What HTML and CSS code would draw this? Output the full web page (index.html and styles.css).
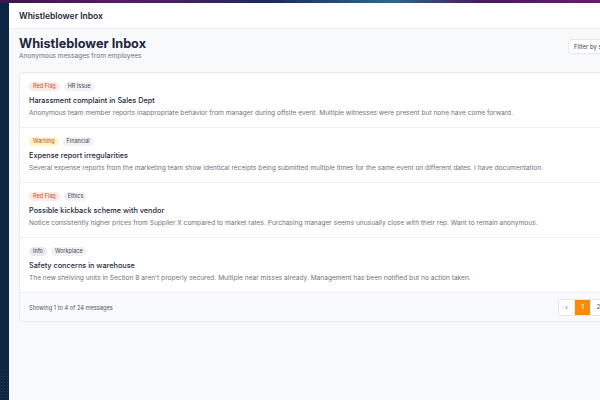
FILE: index.html
```html
<!DOCTYPE html>
<html lang="en">
<head>
    <meta charset="UTF-8">
    <meta name="viewport" content="width=device-width, initial-scale=1.0">
    <title>Whistleblower Inbox</title>
    <link rel="stylesheet" href="styles.css">
</head>
<body>
    <div class="topline"></div>
    <div class="layout">
        <aside class="sidebar"><div class="dots"></div></aside>
        <div class="app">
            <header class="appbar">Whistleblower Inbox</header>
            <main class="main">
                <div class="page-head">
                    <div>
                        <h1>Whistleblower Inbox</h1>
                        <p class="subtitle">Anonymous messages from employees</p>
                    </div>
                    <button class="filter">Filter by status</button>
                </div>

                <div class="card">
                    <div class="msg">
                        <div class="tags"><span class="tag red">Red Flag</span><span class="tag grey">HR Issue</span></div>
                        <h3>Harassment complaint in Sales Dept</h3>
                        <p>Anonymous team member reports inappropriate behavior from manager during offsite event. Multiple witnesses were present but none have come forward.</p>
                    </div>
                    <div class="msg">
                        <div class="tags"><span class="tag yellow">Warning</span><span class="tag grey">Financial</span></div>
                        <h3>Expense report irregularities</h3>
                        <p>Several expense reports from the marketing team show identical receipts being submitted multiple times for the same event on different dates. I have documentation.</p>
                    </div>
                    <div class="msg">
                        <div class="tags"><span class="tag red">Red Flag</span><span class="tag grey">Ethics</span></div>
                        <h3>Possible kickback scheme with vendor</h3>
                        <p>Notice consistently higher prices from Supplier X compared to market rates. Purchasing manager seems unusually close with their rep. Want to remain anonymous.</p>
                    </div>
                    <div class="msg">
                        <div class="tags"><span class="tag info">Info</span><span class="tag grey">Workplace</span></div>
                        <h3>Safety concerns in warehouse</h3>
                        <p>The new shelving units in Section B aren't properly secured. Multiple near misses already. Management has been notified but no action taken.</p>
                    </div>
                    <div class="card-foot">
                        <span>Showing 1 to 4 of 24 messages</span>
                        <div class="pager">
                            <button class="pg">&lsaquo;</button>
                            <button class="pg active">1</button>
                            <button class="pg">2</button>
                            <button class="pg">3</button>
                            <button class="pg">&rsaquo;</button>
                        </div>
                    </div>
                </div>
            </main>
        </div>
    </div>
</body>
</html>
```

FILE: styles.css
```css
* {
    margin: 0;
    padding: 0;
    box-sizing: border-box;
}

html, body {
    width: 600px;
    height: 400px;
    overflow: hidden;
}

body {
    font-family: Inter, 'Liberation Sans', sans-serif;
    background: #f8f9fb;
    color: #1f2937;
}

.topline {
    height: 3px;
    background: linear-gradient(90deg, #3b1450, #5a1a6a 20%, #1e2a5a 45%, #2a6a8e 65%, #4a1a60 80%, #6a1a6a);
}

.layout {
    display: flex;
    height: 397px;
}

.sidebar {
    width: 9px;
    flex-shrink: 0;
    background: #0d2545;
    display: flex;
    flex-direction: column;
    justify-content: flex-end;
}

.dots {
    height: 28px;
    background-image: radial-gradient(#3a2a5a 0.8px, transparent 1px);
    background-size: 3px 3px;
}

.app {
    flex: 1;
    min-width: 0;
}

.appbar {
    height: 26px;
    background: #fff;
    border-bottom: 1px solid #eceef2;
    padding: 0 10px;
    display: flex;
    align-items: center;
    font-size: 8.5px;
    font-weight: 600;
    color: #1f2433;
}

.main {
    padding: 7px 10px;
    width: 650px;
}

.page-head {
    display: flex;
    justify-content: space-between;
    align-items: flex-start;
    margin-bottom: 12px;
}

h1 {
    font-size: 12.7px;
    font-weight: 700;
    color: #1e2640;
    line-height: 15px;
}

.subtitle {
    font-size: 6.6px;
    color: #6f727a;
    margin-top: 1px;
}

.filter {
    margin-top: 3px;
    font-family: inherit;
    font-size: 6px;
    color: #374151;
    background: #fff;
    border: 1px solid #e5e7eb;
    border-radius: 4px;
    height: 15px;
    padding: 0 5px;
    width: 81px;
    text-align: left;
}

.card {
    background: #fff;
    border: 1px solid #e7e9ed;
    border-radius: 5px;
    width: 630px;
    overflow: hidden;
}

.msg {
    height: 55px;
    padding: 9px 9px 0;
    border-bottom: 1px solid #eef0f3;
}

.tags {
    display: flex;
    gap: 4px;
    height: 9px;
}

.tag {
    font-size: 5.5px;
    line-height: 9px;
    padding: 0 4px;
    border-radius: 5px;
}

.tag.red { background: #fbe9e5; color: #c2532d; }
.tag.yellow { background: #fdf3c4; color: #b4502a; }
.tag.grey { background: #f1f2f4; color: #3f4451; }
.tag.info { background: #e9eaee; color: #3f4451; }

.msg h3 {
    font-size: 7.3px;
    font-weight: 500;
    color: #232838;
    margin-top: 4px;
    line-height: 12px;
}

.msg p {
    font-size: 6.6px;
    color: #6f727a;
    margin-top: 1px;
    line-height: 10px;
    white-space: nowrap;
}

.card-foot {
    background: #f9fafb;
    height: 28px;
    padding: 0 10px 0 9px;
    display: flex;
    align-items: center;
    justify-content: space-between;
    font-size: 5.7px;
    color: #4b5563;
}

.pager {
    display: flex;
    border: 1px solid #e5e7eb;
    border-radius: 3px;
    background: #fff;
    overflow: hidden;
    margin-right: -2px;
}

.pg {
    width: 16px;
    height: 15px;
    border: none;
    border-right: 1px solid #eceef1;
    background: #fff;
    font-family: inherit;
    font-size: 6.5px;
    color: #4b5563;
}

.pg.active {
    background: #f68b0c;
    color: #fff;
}
```
